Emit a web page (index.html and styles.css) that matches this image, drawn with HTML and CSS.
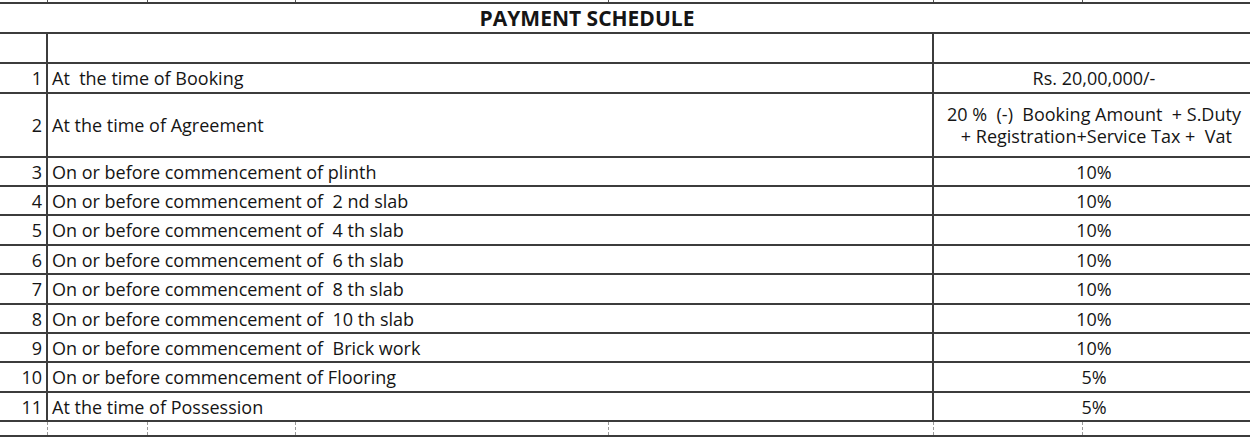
FILE: index.html
```html
<!DOCTYPE html>
<html>
<head>
<meta charset="utf-8">
<link rel="stylesheet" href="styles.css">
</head>
<body>
<table class="sheet">
  <colgroup>
    <col class="c0"><col class="c1"><col class="c2"><col class="c3"><col class="c4"><col class="c5"><col class="c6">
  </colgroup>
  <tr class="strip top"><td></td><td></td><td></td><td></td><td></td><td></td><td></td></tr>
  <tr class="title"><td colspan="7">PAYMENT SCHEDULE</td></tr>
  <tr class="row"><td class="num"></td><td colspan="4" class="desc"></td><td colspan="2" class="amt"></td></tr>
  <tr class="row"><td class="num">1</td><td colspan="4" class="desc">At  the time of Booking</td><td colspan="2" class="amt">Rs. 20,00,000/-</td></tr>
  <tr class="row tall"><td class="num">2</td><td colspan="4" class="desc">At the time of Agreement</td><td colspan="2" class="amt">20 %  (-)  Booking Amount  + S.Duty<br> + Registration+Service Tax +  Vat</td></tr>
  <tr class="row h29"><td class="num">3</td><td colspan="4" class="desc">On or before commencement of plinth</td><td colspan="2" class="amt">10%</td></tr>
  <tr class="row h29"><td class="num">4</td><td colspan="4" class="desc">On or before commencement of  2 nd slab</td><td colspan="2" class="amt">10%</td></tr>
  <tr class="row h30"><td class="num">5</td><td colspan="4" class="desc">On or before commencement of  4 th slab</td><td colspan="2" class="amt">10%</td></tr>
  <tr class="row h29"><td class="num">6</td><td colspan="4" class="desc">On or before commencement of  6 th slab</td><td colspan="2" class="amt">10%</td></tr>
  <tr class="row h30"><td class="num">7</td><td colspan="4" class="desc">On or before commencement of  8 th slab</td><td colspan="2" class="amt">10%</td></tr>
  <tr class="row h29"><td class="num">8</td><td colspan="4" class="desc">On or before commencement of  10 th slab</td><td colspan="2" class="amt">10%</td></tr>
  <tr class="row h29"><td class="num">9</td><td colspan="4" class="desc">On or before commencement of  Brick work</td><td colspan="2" class="amt">10%</td></tr>
  <tr class="row h30"><td class="num">10</td><td colspan="4" class="desc">On or before commencement of Flooring</td><td colspan="2" class="amt">5%</td></tr>
  <tr class="row h29"><td class="num">11</td><td colspan="4" class="desc">At the time of Possession</td><td colspan="2" class="amt">5%</td></tr>
  <tr class="strip bottom"><td></td><td></td><td></td><td></td><td></td><td></td><td></td></tr>
</table>
</body>
</html>
```
FILE: styles.css
```css
html, body {
  margin: 0;
  padding: 0;
  background: #ffffff;
  overflow: hidden;
}
body {
  width: 1250px;
  height: 442px;
  font-family: "Open Sans", Lato, sans-serif;
  color: #151515;
}
.sheet {
  border-collapse: collapse;
  table-layout: fixed;
  width: 1258px;
  font-size: 18px;
  line-height: 22px;
}
.c0 { width: 47px; }
.c1 { width: 100px; }
.c2 { width: 148px; }
.c3 { width: 313px; }
.c4 { width: 325px; }
.c5 { width: 149px; }
.c6 { width: 176px; }
.sheet td {
  padding: 0;
  white-space: pre;
  overflow: hidden;
  border: 0;
  border-bottom: 2px solid #3c3c3c;
}
.strip.top { height: 3px; }
.strip.top td {
  border-right: 1px solid #555;
  line-height: 0;
}
.strip.bottom { height: 15px; }
.strip.bottom td {
  border-right: 1px dashed #9a9a9a;
  line-height: 0;
}
.title { height: 30px; }
.title td {
  text-align: center;
  font-weight: bold;
  font-size: 21px;
  line-height: 24px;
  padding-right: 84px !important;
}
.row { height: 30px; }
.row.tall { height: 64px; }
.row.h29 { height: 29px; }
.row.h30 { height: 30px; }
.num {
  text-align: right;
  padding-right: 4px !important;
  border-right: 2px solid #3c3c3c !important;
}
.desc {
  padding-left: 4px !important;
  border-right: 2px solid #3c3c3c !important;
}
.amt {
  text-align: center;
  padding-right: 4px !important;
}
```
